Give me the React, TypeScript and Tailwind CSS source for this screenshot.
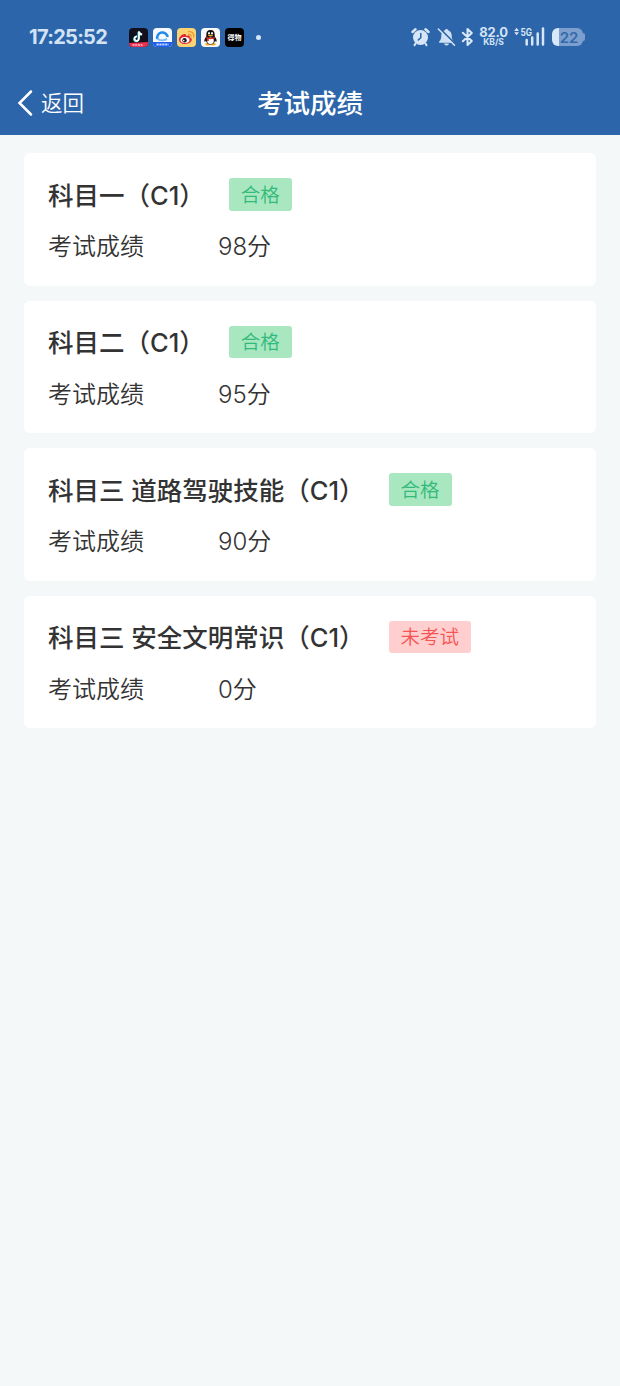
import React from 'react';

interface Exam {
  title: string;
  score: number;
  status: string;
  passed: boolean;
}

const exams: Exam[] = [
  { title: '科目一（C1）', score: 98, status: '合格', passed: true },
  { title: '科目二（C1）', score: 95, status: '合格', passed: true },
  { title: '科目三 道路驾驶技能（C1）', score: 90, status: '合格', passed: true },
  { title: '科目三 安全文明常识（C1）', score: 0, status: '未考试', passed: false },
];

const AppIcons: React.FC = () => (
  <div className="flex gap-[5px]">
    <svg width="19" height="19" viewBox="0 0 19 19">
      <rect width="19" height="19" rx="4" fill="#10111c" />
      <path d="M10 3.2v7.4a2.2 2.2 0 1 1-2-2.2M10 3.5c.4 1.8 1.5 2.7 3.2 2.8" transform="translate(-.6 .5)" fill="none" stroke="#35e5e5" strokeWidth="1.8" />
      <path d="M10 3.2v7.4a2.2 2.2 0 1 1-2-2.2M10 3.5c.4 1.8 1.5 2.7 3.2 2.8" fill="none" stroke="#fff" strokeWidth="1.7" />
      <path d="M0 15 19 14V15a4 4 0 0 1-4 4H4a4 4 0 0 1-4-4z" fill="#ee2f4d" />
      <path d="M3.5 17h10" stroke="#ffc4cb" strokeWidth="1.6" strokeDasharray="2 .7" />
    </svg>
    <svg width="19" height="19" viewBox="0 0 19 19">
      <rect width="19" height="19" rx="4" fill="#f7fbff" />
      <path d="M4.3 11A5.3 5.3 0 1 1 14.700 9" fill="none" stroke="#238bea" strokeWidth="2.600" />
      <path d="M4.500 10.500c2 2.300 6 2.400 9.500 .5" fill="none" stroke="#7fbff5" strokeWidth="2" />
      <path d="M0 14h19v1a4 4 0 0 1-4 4H4a4 4 0 0 1-4-4z" fill="#1e5df0" />
      <path d="M3.5 16.5h12" stroke="#c3dcff" strokeWidth="1.8" strokeDasharray="2.2 .7" />
    </svg>
    <svg width="19" height="19" viewBox="0 0 19 19">
      <rect width="19" height="19" rx="4" fill="#fbd372" />
      <path d="M2 11.5C2 8.5 6.5 5 8.5 6.2c.7.5.6 1.2.4 1.900 2-.9 4.300-.7 3.800 1.300 1.600.4 2.400 1.200 2.100 2.700C14.300 14.500 11.500 16 8 16s-6-1.800-6-4.500z" fill="#df2632" />
      <ellipse cx="8" cy="12" rx="4.500" ry="3" fill="#fff" />
      <circle cx="7.500" cy="12.200" r="2.200" fill="#17171a" />
      <circle cx="6.700" cy="12.600" r=".8" fill="#fff" />
      <path d="M11.500 6.300c1.800-.3 3 1 2.600 2.700M11.700 3.600c3.500-.5 5.700 2 5 5.600" fill="none" stroke="#ef9030" strokeWidth="1.200" strokeLinecap="round" />
    </svg>
    <svg width="19" height="19" viewBox="0 0 19 19">
      <rect width="19" height="19" rx="4" fill="#fafafa" />
      <ellipse cx="6.800" cy="16.300" rx="2.700" ry="1.300" fill="#f4ac25" />
      <ellipse cx="12.200" cy="16.300" rx="2.700" ry="1.300" fill="#f4ac25" />
      <path d="M9.500 2c-3 0-4.200 2-4.200 4.500v1.700C4 10 3 12 3.500 13.500c.3.700 1-.2 1.500-.8.500 2.300 2 3.800 4.500 3.800s4-1.500 4.500-3.800c.5.600 1.200 1.500 1.500.8.500-1.500-.5-3.500-1.800-5.300V6.500C13.700 4 12.500 2 9.500 2z" fill="#111" />
      <ellipse cx="9.500" cy="12.800" rx="3.300" ry="3.200" fill="#fff" />
      <ellipse cx="8" cy="5.300" rx=".9" ry="1.300" fill="#fff" />
      <ellipse cx="11" cy="5.300" rx=".9" ry="1.300" fill="#fff" />
      <ellipse cx="9.500" cy="7.600" rx="2.600" ry=".8" fill="#f6a91e" />
      <path d="M5.200 8.800c2.600 1.500 6 1.500 8.600 0v1.400c-2.300 1.100-4.200 1.200-6 .9v2H6v-2.700l-.8-.3z" fill="#e62a2a" />
    </svg>
    <div className="flex h-[19px] w-[19px] items-center justify-center rounded bg-black text-[7px] leading-none font-bold text-white">
      得物
    </div>
  </div>
);

const AlarmIcon: React.FC = () => (
  <svg width="19" height="20" viewBox="0 0 19 20">
    <circle cx="9.500" cy="10.500" r="7.500" fill="#d7e6f7" />
    <path d="M1.500 5 4.500 2.300M17.500 5 14.500 2.300" stroke="#d7e6f7" strokeWidth="2.500" strokeLinecap="round" />
    <path d="m4.500 16.500-1 1.800M14.500 16.500l1 1.800" stroke="#d7e6f7" strokeWidth="2" strokeLinecap="round" />
    <path d="M9.800 6.500v4.200l-2.500 2.200" fill="none" stroke="#2c65aa" strokeWidth="1.500" strokeLinecap="round" />
  </svg>
);

const MutedBellIcon: React.FC = () => (
  <svg width="19" height="20" viewBox="0 0 19 20">
    <path d="M9.500 2c.9 0 1.400.6 1.500 1.300 2.400.7 3.700 2.700 3.700 5.200 0 3 .6 4.500 1.900 5.700.7.700.4 1.600-.6 1.600H3c-1 0-1.300-.9-.6-1.600 1.300-1.200 1.900-2.700 1.900-5.700 0-2.500 1.300-4.500 3.700-5.200C8.100 2.600 8.600 2 9.500 2z" fill="#cfe0f4" />
    <path d="M7 16.500h5c-.3 1.300-1.200 2-2.500 2S7.300 17.800 7 16.500z" fill="#cfe0f4" />
    <path d="m2.500 1.500 15.800 15.800" stroke="#2c65aa" strokeWidth="2.200" />
    <path d="m1.300 2 16.200 16.200" stroke="#d7e6f7" strokeWidth="1.500" strokeLinecap="round" />
  </svg>
);

const BluetoothIcon: React.FC = () => (
  <svg width="13" height="20" viewBox="0 0 13 20">
    <path d="m1.800 5.700 9 8.300L6.500 18V2l4.300 4-9 8.300" fill="none" stroke="#dce9f8" strokeWidth="2" strokeLinecap="round" strokeLinejoin="round" />
  </svg>
);

const SignalIcon: React.FC = () => (
  <svg width="31" height="20" viewBox="0 0 31 20">
    <path d="M2.600 0.800 5 4H.2zM2.600 8.200 5 5.200H.2z" fill="#d7e6f7" />
    <text x="6.500" y="8.500" fontSize="10" fontWeight="700" fill="#d7e6f7" textLength="11.500" lengthAdjust="spacingAndGlyphs">
      5G
    </text>
    <path d="M12.700 13v4.500M18.200 10.500v7M23.700 6.500v11M29 1.500v16" stroke="#d7e6f7" strokeWidth="2.500" strokeLinecap="round" />
  </svg>
);

const StatusBar: React.FC = () => (
  <div className="flex h-[74px] items-center pr-[35px] pl-[29px] text-[#d3e3f6]">
    <div className="w-[100px] text-[20px] leading-none font-bold tracking-[-0.7px]">17:25:52</div>
    <AppIcons />
    <div className="ml-3 h-[5px] w-[5px] rounded-full bg-[#d7e6f7]" />
    <div className="ml-auto flex items-center">
      <AlarmIcon />
      <div className="ml-[7px]">
        <MutedBellIcon />
      </div>
      <div className="ml-[5px]">
        <BluetoothIcon />
      </div>
      <div className="ml-[5px] flex w-[29px] flex-col items-center font-bold">
        <span className="text-[13px] leading-[11px] tracking-[-0.2px]">82.0</span>
        <span className="text-[8.5px] leading-[9px]">KB/S</span>
      </div>
      <div className="ml-[6px]">
        <SignalIcon />
      </div>
      <div className="ml-[7px] flex items-center">
        <div className="flex h-[18px] w-[31px] items-center justify-center rounded-[6px] bg-linear-to-r from-[#d9e8f8] from-[24%] to-[#7c9fce] to-[24%] text-[15px] leading-none font-semibold text-[#3269ab]">
          <span className="pl-[3px]">22</span>
        </div>
        <div className="h-[8px] w-[2px] rounded-r-full bg-[#7c9fce]" />
      </div>
    </div>
  </div>
);

const ExamCard: React.FC<{ exam: Exam }> = ({ exam }) => (
  <div className="h-[132.5px] rounded-[6px] bg-white px-6 pt-[25px] text-[#333]">
    <div className="flex h-[33px] items-center">
      <h2 className="pt-0.5 text-[25.5px] leading-none font-medium whitespace-nowrap">{exam.title}</h2>
      <span
        className={`ml-6 flex h-[32.5px] items-center rounded-[3px] px-3 pt-0.5 text-[19.5px] leading-none font-[350] ${
          exam.passed ? 'bg-[#a9e7c1] text-[#32ba7b]' : 'bg-[#ffcfcf] text-[#f75555]'
        }`}
      >
        {exam.status}
      </span>
    </div>
    <div className="mt-[18px] flex items-center text-2xl leading-[36px] font-[350]">
      <span className="w-[170px]">考试成绩</span>
      <span>{exam.score}分</span>
    </div>
  </div>
);

const App: React.FC = () => {
  return (
    <div className="min-h-screen bg-[#f4f8f9] font-['Inter','Noto_Sans_CJK_SC',sans-serif]">
      <header className="h-[135px] bg-[#2c65aa]">
        <StatusBar />
        <nav className="grid h-[58px] grid-cols-3 items-center text-white">
          <button className="flex items-center pl-[17px] text-[21.5px] leading-none font-[350]">
            <svg width="16" height="28" viewBox="0 0 16 28" className="mr-[8px]">
              <path d="M14 2.5 2.5 14 14 25.5" fill="none" stroke="#fff" strokeWidth="2.5" strokeLinecap="round" />
            </svg>
            <span className="pt-0.5">返回</span>
          </button>
          <h1 className="text-center text-[26.5px] leading-none font-medium">考试成绩</h1>
        </nav>
      </header>

      <main className="flex flex-col gap-[15px] px-6 pt-[18px]">
        {exams.map((exam) => (
          <ExamCard key={exam.title} exam={exam} />
        ))}
      </main>
    </div>
  );
};

export default App;
